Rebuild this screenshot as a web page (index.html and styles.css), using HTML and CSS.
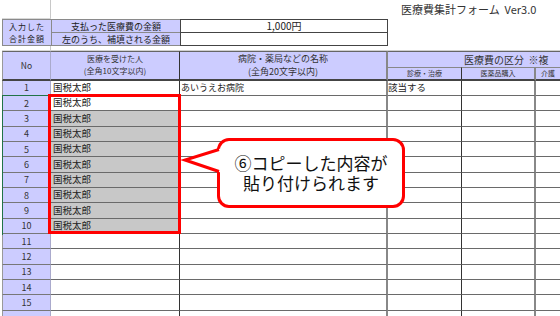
FILE: index.html
```html
<!DOCTYPE html>
<html lang="ja">
<head>
    <meta charset="UTF-8">
    <meta name="viewport" content="width=device-width, initial-scale=1.0">
    <title>医療費集計フォーム</title>
    <link rel="stylesheet" href="styles.css">
</head>
<body>
    <div class="sheet" id="sheet">
        <!-- 上の空白行とタイトル -->
        <div class="cell grid-cell"></div>
        <div class="cell title">医療費集計フォーム&nbsp;&nbsp;Ver3.0</div>

        <!-- 合計金額 -->
        <div class="cell blue sum-label">
            <span>入力した</span>
            <span>合計金額</span>
        </div>
        <div class="cell blue sum-name first">支払った医療費の金額</div>
        <div class="cell sum-value first">1,000円</div>
        <div class="cell blank"></div>
        <div class="cell blue sum-name">左のうち、補填される金額</div>
        <div class="cell sum-value"></div>
        <div class="cell blank"></div>

        <!-- 隙間の行 -->
        <div class="cell grid-cell"></div>
        <div class="cell gap-row"></div>

        <!-- 見出し -->
        <div class="cell blue head head-no">No</div>
        <div class="cell blue head head-two head-name">
            <span>医療を受けた人</span>
            <span>(全角10文字以内)</span>
        </div>
        <div class="cell blue head head-two head-place">
            <span>病院・薬局などの名称</span>
            <span>(全角20文字以内)</span>
        </div>
        <div class="cell blue head head-kind">医療費の区分&nbsp;&nbsp;※複</div>
        <div class="cell blue head sub-head col-4">診療・治療</div>
        <div class="cell blue head sub-head col-5">医薬品購入</div>
        <div class="cell blue head sub-head col-6">介護</div>
    </div>

    <div class="active-col"></div>
    <div class="selection"></div>

    <svg class="callout-tail" width="45" height="40" viewBox="0 0 45 40">
        <polygon points="5,20 42,8 42,33" fill="#fff"/>
        <polyline points="39,9.5 5,20 39,31.5" fill="none" stroke="#f00" stroke-width="3" stroke-linejoin="miter"/>
    </svg>
    <div class="callout">
        <span class="callout-line">⑥コピーした内容が</span>
        <span class="callout-line">貼り付けられます</span>
    </div>

    <script>
        // 明細の行データ
        const meisai = [
            { name: "国税太郎", place: "あいうえお病院", kind: "該当する" },
            { name: "国税太郎" },
            { name: "国税太郎", copied: true },
            { name: "国税太郎", copied: true },
            { name: "国税太郎", copied: true },
            { name: "国税太郎", copied: true },
            { name: "国税太郎", copied: true },
            { name: "国税太郎", copied: true },
            { name: "国税太郎", copied: true },
            { name: "国税太郎", copied: true }
        ];

        function hienThiMeisai() {
            const sheet = document.getElementById("sheet");
            for (let i = 0; i < 16; i++) {
                const row = meisai[i] || {};
                // 16行目は画面の端で切れるので番号は出さない
                const no = i < 15 ? i + 1 : "";
                const html = `
                    <div class="cell blue row-no">${no}</div>
                    <div class="cell data col-2${row.copied ? " copied" : ""}">${row.name || ""}</div>
                    <div class="cell data col-3">${row.place || ""}</div>
                    <div class="cell data col-4">${row.kind || ""}</div>
                    <div class="cell data col-5"></div>
                    <div class="cell data col-6"></div>
                `;
                sheet.insertAdjacentHTML("beforeend", html);
            }
        }

        hienThiMeisai();
    </script>
</body>
</html>
```

FILE: styles.css
```css
body {
    margin: 0;
    overflow: hidden;
    background-color: white;
    font-family: "Noto Sans CJK JP", "Liberation Sans", sans-serif;
    color: #222;
}

.sheet {
    display: grid;
    grid-template-columns: 49px 129px 208px 74px 74px 74px;
    grid-template-rows: 19px 14px 13px 5px 16px 13.7px;
    grid-auto-rows: 15.33px;
    margin-left: 2px;
    width: 608px;
}

.cell {
    display: flex;
    align-items: center;
    box-sizing: border-box;
    overflow: hidden;
    white-space: nowrap;
    font-size: 9px;
    line-height: 1;
}

.blue {
    background-color: #ccccff;
}

/* 上の部分 */
.grid-cell {
    border-right: 1px solid #c8c8c8;
    border-bottom: 1px solid #d8d8d8;
}

.title {
    grid-column: 2 / 7;
    padding-left: 350px;
    font-size: 11px;
    color: #333;
}

.sum-label {
    grid-row: span 2;
    flex-direction: column;
    justify-content: center;
    font-size: 8px;
    line-height: 12px;
    letter-spacing: 1px;
    border: 1px solid #8a8a8a;
    border-right: none;
}

.sum-name {
    justify-content: center;
    font-size: 9px;
    border-left: 1px solid #8a8a8a;
    border-bottom: 1px solid #8a8a8a;
}

.sum-value {
    justify-content: center;
    font-size: 10px;
    border: 1px solid #444;
    border-top: none;
}

.first {
    border-top: 1px solid #8a8a8a;
}

.sum-value.first {
    border-top: 1px solid #444;
}

.blank {
    grid-column: 4 / 7;
}

.gap-row {
    grid-column: 2 / 7;
    border-bottom: 1px solid #d0d0d0;
}

/* 見出し */
.head {
    justify-content: center;
    border-top: 1px solid #666;
    border-right: 1px solid #888;
    color: #333;
}

.head-no,
.head-two {
    grid-row: span 2;
    border-bottom: 2px solid #444;
}

.head-no {
    font-size: 8.5px;
    border-left: 1px solid #999;
    border-right-color: #aaaacc;
}

.head-two {
    flex-direction: column;
    gap: 4px;
    font-size: 9px;
}

.head-name {
    font-size: 8px;
    border-right-color: #333;
}

.head-place {
    border-right: 2px solid #888;
}

.head-kind {
    grid-column: 4 / 7;
    justify-content: flex-start;
    padding-left: 76px;
    font-size: 10px;
}

.sub-head {
    border-top: 1px solid #888;
    border-bottom: 2px solid #444;
    font-size: 7px;
}

.sub-head.col-6 {
    justify-content: flex-start;
    padding-left: 5px;
}

/* 明細 */
.row-no {
    justify-content: center;
    font-size: 9px;
    color: #333;
    border-left: 1px solid #999;
    border-right: 1px solid #aaaacc;
    border-bottom: 1px solid #777;
}

.data {
    padding-left: 2px;
    font-size: 9.5px;
    border-bottom: 1px solid #6a6a6a;
}

.col-2 {
    border-right: 1px solid #333;
}

.col-3 {
    padding-left: 1px;
    font-size: 9px;
    border-right: 2px solid #888;
}

.col-4 {
    padding-left: 0;
    border-right: 1px solid #333;
}

.col-5 {
    border-right: 2px solid #888;
}

.col-6 {
    border-right: 1px solid #333;
}

.copied {
    background-color: #c8c8c8;
}

/* 選択範囲と吹き出し */
.active-col {
    position: absolute;
    left: 2px;
    top: 95px;
    width: 178px;
    height: 139px;
    border-top: 1px solid #217346;
    border-left: 1px solid #217346;
}

.selection {
    position: absolute;
    left: 48px;
    top: 94px;
    width: 133px;
    height: 140px;
    box-sizing: border-box;
    border: 3px solid #ff0000;
}

.callout {
    position: absolute;
    left: 217px;
    top: 138px;
    width: 188px;
    height: 70px;
    box-sizing: border-box;
    border: 3px solid #ff0000;
    border-radius: 12px;
    background-color: white;
    display: flex;
    flex-direction: column;
    justify-content: center;
    align-items: center;
    font-size: 17px;
    color: #111;
}

.callout-line {
    height: 20px;
    line-height: 20px;
}

.callout-tail {
    position: absolute;
    left: 180px;
    top: 140px;
    z-index: 2;
}
```
